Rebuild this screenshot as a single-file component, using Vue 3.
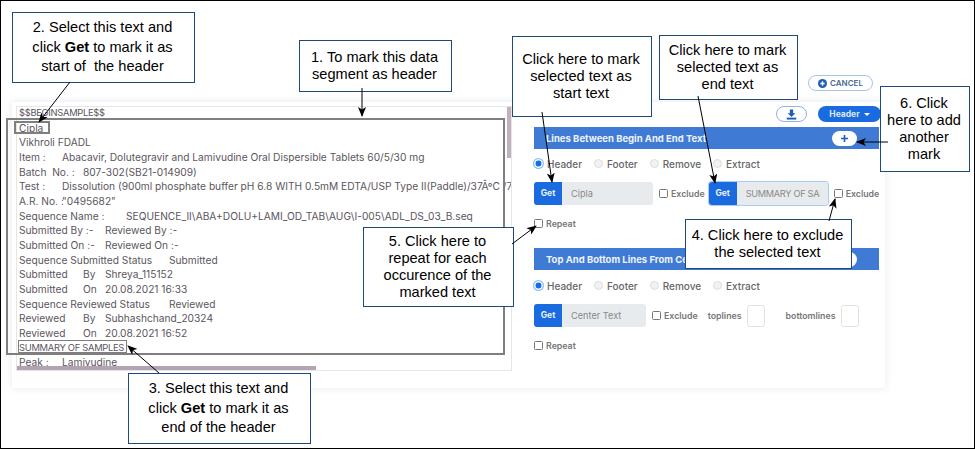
<template>
  <div class="shot">
    <div class="cancel-row">
      <button class="cancel">
        <svg width="9" height="9" viewBox="0 0 10 10"><circle cx="5" cy="5" r="5" fill="#1d5fb8" /><path d="M5 2.6v4.8M2.6 5h4.8" stroke="#fff" stroke-width="1.5" /></svg>
        CANCEL
      </button>
    </div>
    <div class="card">
      <div class="log">
        <div class="log-lines">
          <div v-for="(line, i) in logLines" :key="i" class="log-line" :class="{ caps: line.length === 1 && line[0][0] === line[0][0].toUpperCase() }">
            <span v-for="(cell, j) in line" :key="j" :style="cell[1] ? { width: cell[1] + 'px' } : null">{{ cell[0] }}</span>
          </div>
        </div>
        <div class="scroll-v"></div>
        <div class="scroll-h"></div>
      </div>
      <div class="form">
        <div class="toolbar">
          <button class="icon-btn">
            <svg width="11" height="11" viewBox="0 0 12 12"><path d="M4.2 0.5h3.6v4.2h2.4L6 8.6 1.8 4.7h2.4z" fill="#1d5fb8" /><path d="M0.8 9.4h10.4v2.1H0.8z" fill="#1d5fb8" /></svg>
          </button>
          <button class="header-btn">Header <span class="caret"></span></button>
        </div>

        <div class="bar">
          <span>Lines Between Begin And End Text</span>
          <button class="add-btn">
            <svg width="9" height="9" viewBox="0 0 9 9"><path d="M4.5 1v7M1 4.5h7" stroke="#1d5fb8" stroke-width="1.6" /></svg>
          </button>
        </div>
        <div class="radios">
          <label v-for="(r, i) in radioOptions" :key="r" class="radio-item">
            <span class="radio" :class="{ on: i === 0 }"></span>{{ r }}
          </label>
        </div>
        <div class="get-row">
          <div class="get-group first">
            <span class="get">Get</span><span class="field"><span>Cipla</span></span>
          </div>
          <label class="check"><span class="box"></span>Exclude</label>
          <div class="get-group second focused">
            <span class="get">Get</span><span class="field"><span class="tight">SUMMARY OF SAMPLES</span></span>
          </div>
          <label class="check"><span class="box"></span>Exclude</label>
        </div>
        <label class="check repeat"><span class="box"></span>Repeat</label>

        <div class="bar bar-two">
          <span>Top And Bottom Lines From Center Text</span>
          <button class="add-btn"></button>
        </div>
        <div class="radios radios-two">
          <label v-for="(r, i) in radioOptions" :key="r" class="radio-item">
            <span class="radio" :class="{ on: i === 0 }"></span>{{ r }}
          </label>
        </div>
        <div class="get-row">
          <div class="get-group center">
            <span class="get">Get</span><span class="field"><span>Center Text</span></span>
          </div>
          <label class="check"><span class="box"></span>Exclude</label>
          <span class="lines-label top">toplines</span>
          <span class="lines-box"></span>
          <span class="lines-label bottom">bottomlines</span>
          <span class="lines-box"></span>
        </div>
        <label class="check repeat"><span class="box"></span>Repeat</label>
      </div>
    </div>

    <!-- annotations laid over the screenshot -->
    <div class="mark mark-header"></div>
    <div class="mark mark-cipla"></div>
    <div class="mark mark-summary"></div>

    <div v-for="c in callouts" :key="c.id" class="callout" :class="c.id">
      <div v-for="(l, i) in c.lines" :key="i">
        {{ l[0] }}<b v-if="l[1]">{{ l[1] }}</b>{{ l[2] }}
      </div>
    </div>

    <svg class="arrows" width="975" height="449">
      <defs>
        <marker id="head" markerWidth="10" markerHeight="8" refX="9" refY="4" orient="auto" markerUnits="userSpaceOnUse">
          <path d="M0 0L10 4L0 8L2.5 4z" fill="#000" />
        </marker>
      </defs>
      <line v-for="(a, i) in arrows" :key="i" :x1="a[0]" :y1="a[1]" :x2="a[2]" :y2="a[3]" stroke="#000" stroke-width="1" marker-end="url(#head)" />
    </svg>
  </div>
</template>

<script setup>
// each log line is a list of [text, column width]
const logLines = [
  [['$$BEGINSAMPLE$$']],
  [['Cipla']],
  [['Vikhroli FDADL']],
  [['Item :', 43], ['Abacavir, Dolutegravir and Lamivudine Oral Dispersible Tablets 60/5/30 mg']],
  [['Batch  No. :', 64], ['807-302(SB21-014909)']],
  [['Test :', 43], ['Dissolution (900ml phosphate buffer pH 6.8 WITH 0.5mM EDTA/USP Type II(Paddle)/37ÂºC /75']],
  [['A.R. No. :', 43], ['"0495682"']],
  [['Sequence Name :', 107], ['SEQUENCE_II\\ABA+DOLU+LAMI_OD_TAB\\AUG\\I-005\\ADL_DS_03_B.seq']],
  [['Submitted By :-', 86], ['Reviewed By :-']],
  [['Submitted On :-', 86], ['Reviewed On :-']],
  [['Sequence Submitted Status', 150], ['Submitted']],
  [['Submitted', 64], ['By', 22], ['Shreya_115152']],
  [['Submitted', 64], ['On', 22], ['20.08.2021 16:33']],
  [['Sequence Reviewed Status', 150], ['Reviewed']],
  [['Reviewed', 64], ['By', 22], ['Subhashchand_20324']],
  [['Reviewed', 64], ['On', 22], ['20.08.2021 16:52']],
  [['SUMMARY OF SAMPLES']],
  [['Peak :', 43], ['Lamivudine']],
]

const radioOptions = ['Header', 'Footer', 'Remove', 'Extract']

const callouts = [
  { id: 'c1', lines: [['1. To mark this data'], ['segment as header']] },
  { id: 'c2', lines: [['2. Select this text and'], ['click ', 'Get', ' to mark it as'], ['start of  the header']] },
  { id: 'c3', lines: [['3. Select this text and'], ['click ', 'Get', ' to mark it as'], ['end of the header']] },
  { id: 'c4', lines: [['4. Click here to exclude'], ['the selected text']] },
  { id: 'c5', lines: [['5. Click here to'], ['repeat for each'], ['occurence of the'], ['marked text']] },
  { id: 'c6', lines: [['6. Click'], ['here to add'], ['another'], ['mark']] },
  { id: 'c7', lines: [['Click here to mark'], ['selected text as'], ['start text']] },
  { id: 'c8', lines: [['Click here to mark'], ['selected text as'], ['end text']] },
]

const arrows = [
  [70, 82, 39, 122],
  [362, 88, 362, 116],
  [159, 373, 128, 346],
  [542, 112, 552, 182],
  [698, 96, 715, 183],
  [888, 142, 857, 142],
  [829, 221, 835, 199],
  [512, 244, 536, 226],
]
</script>

<style scoped>
.shot {
  position: relative;
  width: 975px;
  height: 449px;
  box-sizing: border-box;
  border: 1px solid #000;
  background: #fff;
  overflow: hidden;
  font-family: Inter, "Noto Sans", sans-serif;
  color: #555;
}
button {
  font-family: inherit;
  padding: 0;
  cursor: pointer;
}
.cancel-row {
  display: flex;
  justify-content: flex-end;
  padding: 74px 101px 0 0;
}
.cancel {
  width: 65px;
  height: 16px;
  display: flex;
  align-items: center;
  justify-content: center;
  gap: 3px;
  background: #fff;
  border: 1px solid #a9c4e8;
  border-radius: 8px;
  color: #4a6a90;
  font-size: 8px;
  font-weight: 600;
}
.card {
  display: flex;
  width: 873px;
  height: 286px;
  box-sizing: border-box;
  margin: 11px 0 0 11px;
  padding: 4px;
  background: #fff;
  box-shadow: 0 0 8px rgba(60, 70, 130, 0.12);
}
.log {
  position: relative;
  width: 496px;
  height: 265px;
  box-sizing: border-box;
  padding: 0 0 0 2px;
  border: 1px solid #e6e6e6;
  overflow: hidden;
  flex: none;
}
.log-lines {
  margin-top: -1px;
}
.log-line {
  display: flex;
  height: 14.68px;
  line-height: 14.68px;
  font-size: 10.2px;
  white-space: pre;
  color: #5b5560;
}
.log-line.caps {
  font-size: 9.4px;
  letter-spacing: -0.3px;
}
.log-line span {
  flex: none;
}
.scroll-v {
  position: absolute;
  right: 0;
  top: 0;
  width: 4px;
  height: 51px;
  background: #bfb2bd;
}
.scroll-h {
  position: absolute;
  left: 0;
  bottom: 0;
  width: 299px;
  height: 4px;
  background: #b3a3b3;
}
.form {
  width: 345px;
  margin-left: 22px;
  flex: none;
}
.toolbar {
  display: flex;
  justify-content: flex-end;
  gap: 11px;
  margin-right: -2px;
}
.icon-btn {
  width: 31px;
  height: 16px;
  display: flex;
  align-items: center;
  justify-content: center;
  background: #fff;
  border: 1px solid #8fb3e6;
  border-radius: 8px;
}
.header-btn {
  width: 63px;
  height: 16px;
  background: #1a6be0;
  border: 0;
  border-radius: 8px;
  color: #dfe9fa;
  font-size: 8.5px;
  font-weight: 700;
}
.caret {
  display: inline-block;
  margin-left: 2px;
  vertical-align: middle;
  border: 3.5px solid transparent;
  border-top-color: #fff;
  border-bottom: 0;
}
.bar {
  display: flex;
  align-items: center;
  justify-content: space-between;
  height: 22px;
  margin-top: 5px;
  padding: 0 22px 0 12px;
  background: #3f7bd4;
  color: #eef3fb;
  font-size: 9.5px;
  font-weight: 700;
}
.bar-two {
  margin-top: 19px;
}
.add-btn {
  width: 25px;
  height: 15px;
  display: flex;
  align-items: center;
  justify-content: center;
  background: #fff;
  border: 0;
  border-radius: 8px;
}
.radios {
  display: flex;
  align-items: center;
  height: 15px;
  margin-top: 7px;
}
.radios-two {
  margin-top: 8px;
}
.radio-item {
  display: flex;
  align-items: center;
  gap: 4px;
  margin-right: 12px;
  font-size: 10px;
  font-weight: 500;
  color: #666;
}
.radio {
  width: 9px;
  height: 9px;
  box-sizing: border-box;
  border: 1px solid #ddd;
  border-radius: 50%;
  background: #f2f2f2;
}
.radio.on {
  background: #0f6df0;
  border: 0;
  box-shadow: inset 0 0 0 1.5px #fff, 0 0 0 1px #8dbcf5;
}
.get-row {
  display: flex;
  align-items: center;
  height: 23px;
  margin-top: 11px;
}
.get-group {
  display: flex;
  height: 23px;
  border-radius: 3px;
  overflow: hidden;
  flex: none;
}
.get-group.first {
  width: 119px;
}
.get-group.second {
  width: 119px;
  margin-left: 4px;
}
.get-group.center {
  width: 112px;
}
.focused {
  box-shadow: 0 0 0 1px #a9ccf7;
}
.get {
  width: 28px;
  flex: none;
  line-height: 23px;
  text-align: center;
  background: #1a6be0;
  color: #eaf1fc;
  font-size: 8.5px;
  font-weight: 700;
}
.field {
  flex: 1;
  min-width: 0;
  padding: 0 8px 0 9px;
  line-height: 23px;
  background: #e8ebee;
  color: #888;
  font-size: 9.2px;
}
.field span {
  display: block;
  white-space: nowrap;
  overflow: hidden;
}
.field .tight {
  letter-spacing: -0.3px;
}
.check {
  display: flex;
  align-items: center;
  gap: 3px;
  font-size: 8.8px;
  font-weight: 600;
  color: #777;
  flex: none;
}
.get-row .check {
  margin-left: 6px;
}
.box {
  width: 9px;
  height: 9px;
  box-sizing: border-box;
  border: 1px solid #777;
  border-radius: 1.5px;
  background: #fff;
}
.repeat {
  height: 12px;
  margin-top: 12px;
}
.lines-label {
  font-size: 8.8px;
  font-weight: 600;
  color: #777;
}
.lines-label.top {
  margin-left: 10px;
}
.lines-label.bottom {
  margin-left: 21px;
}
.lines-box {
  width: 18px;
  height: 22px;
  box-sizing: border-box;
  margin-left: 5px;
  border: 1px solid #e2e2e2;
  border-radius: 3px;
}
.mark {
  position: absolute;
  box-sizing: border-box;
  border: 2px solid #7f7f7f;
}
.mark-header {
  left: 5px;
  top: 117px;
  width: 499px;
  height: 237px;
}
.mark-cipla {
  left: 13px;
  top: 120px;
  width: 36px;
  height: 13px;
}
.mark-summary {
  left: 17px;
  top: 339px;
  width: 109px;
  height: 13px;
  border-width: 1.5px;
}
.callout {
  position: absolute;
  box-sizing: border-box;
  display: flex;
  flex-direction: column;
  justify-content: center;
  padding-right: 2px;
  border: 1px solid #1f497d;
  background: #fff;
  color: #000;
  font-family: "Liberation Sans", Arial, sans-serif;
  font-size: 14.6px;
  line-height: 17px;
  text-align: center;
  white-space: pre;
}
.c1 { left: 298px; top: 39px; width: 153px; height: 52px; }
.c2 { left: 11px; top: 11px; width: 183px; height: 71px; line-height: 19.5px; }
.c3 { left: 127px; top: 372px; width: 183px; height: 71px; line-height: 19.5px; }
.c4 { left: 684px; top: 218px; width: 167px; height: 50px; }
.c5 { left: 362px; top: 226px; width: 151px; height: 80px; }
.c6 { left: 879px; top: 85px; width: 90px; height: 86px; }
.c7 { left: 511px; top: 35px; width: 140px; height: 81px; }
.c8 { left: 658px; top: 34px; width: 139px; height: 65px; }
.arrows {
  position: absolute;
  left: -1px;
  top: -1px;
  pointer-events: none;
}
</style>
